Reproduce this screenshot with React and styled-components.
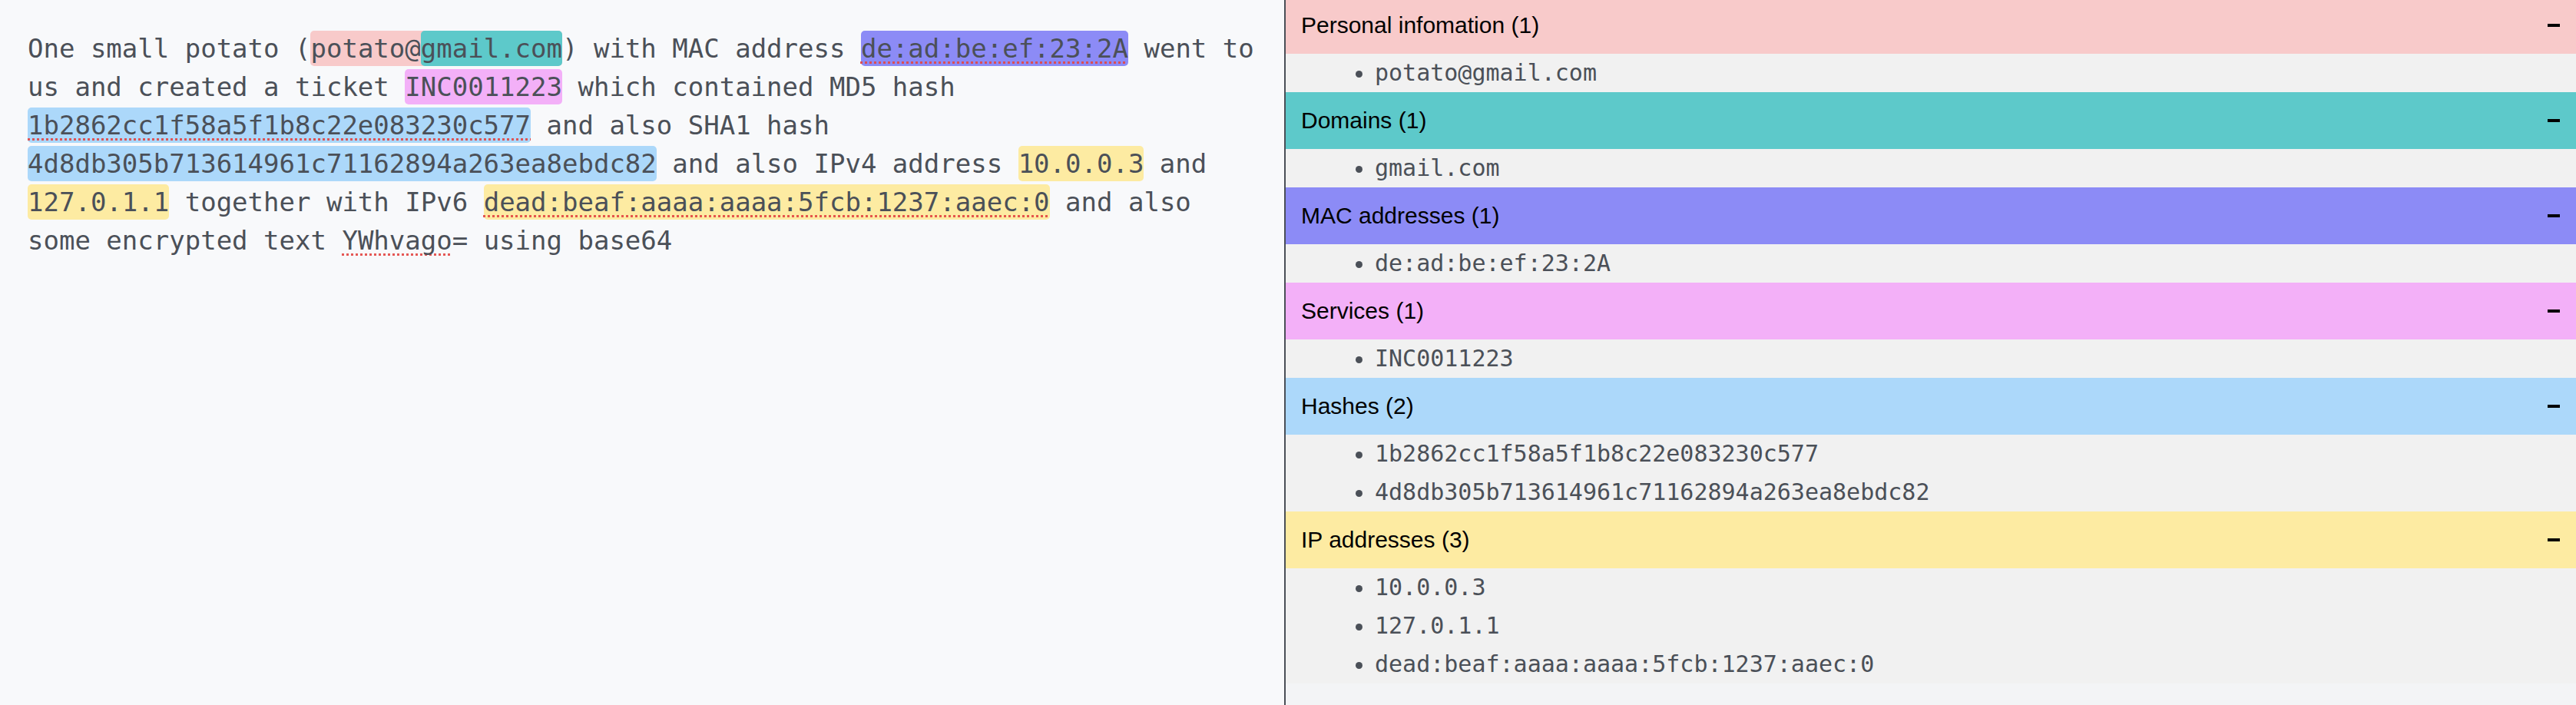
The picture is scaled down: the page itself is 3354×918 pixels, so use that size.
import React from "react";
import styled, { createGlobalStyle } from "styled-components";

const GlobalStyle = createGlobalStyle`
  html, body { margin: 0; padding: 0; }
  body { overflow: hidden; background: #f3f4f6; }
`;

const COLORS = {
  personal: "#f8caca",
  domain: "#5dc9ca",
  mac: "#8c8bf6",
  service: "#f3b0f8",
  hash: "#acd8fa",
  ip: "#fdeba2",
};

const Layout = styled.div`
  display: grid;
  grid-template-columns: 1672px 1fr;
  height: 918px;
  overflow: hidden;
`;

const Editor = styled.div`
  background: #f8f9fb;
  padding: 38px 32px 0 36px;
  font-family: "DejaVu Sans Mono", "Liberation Mono", monospace;
  font-size: 34px;
  line-height: 50px;
  color: #4b5058;
  white-space: pre-wrap;
  word-break: normal;
`;

const Mark = styled.span`
  background: ${(p) => p.$color};
  border-radius: 5px;
  padding: 3px 0;
`;

const Misspelt = styled.span`
  text-decoration-line: underline;
  text-decoration-style: dotted;
  text-decoration-color: rgba(226, 70, 66, 0.9);
  text-decoration-thickness: 3px;
  text-underline-offset: 5px;
  text-decoration-skip-ink: none;
`;

const Panel = styled.aside`
  border-left: 2px solid #4a4f57;
  background: #f3f4f6;
  overflow: hidden;
`;

const SectionList = styled.div`
  margin-top: -4px;
`;

const Header = styled.div`
  height: 74px;
  background: ${(p) => p.$color};
  display: flex;
  align-items: center;
  justify-content: space-between;
  padding: 0 21px 0 20px;
  font-family: "Liberation Sans", Arial, sans-serif;
  font-size: 30px;
  color: #000;
`;

const Toggle = styled.button`
  border: 0;
  background: transparent;
  padding: 0;
  width: 16px;
  height: 20px;
  display: flex;
  align-items: center;
  cursor: pointer;
`;

const MinusBar = styled.span`
  display: block;
  width: 16px;
  height: 4px;
  background: #000;
`;

const Items = styled.ul`
  margin: 0;
  padding: 0 0 0 116px;
  background: #f1f1f1;
  list-style: disc;
  font-family: "DejaVu Sans Mono", "Liberation Mono", monospace;
  font-size: 30px;
  color: #4b5058;
`;

const Item = styled.li`
  line-height: 50px;
  padding-left: 0;
`;

const sections = [
  { title: "Personal infomation", color: COLORS.personal, items: ["potato@gmail.com"] },
  { title: "Domains", color: COLORS.domain, items: ["gmail.com"] },
  { title: "MAC addresses", color: COLORS.mac, items: ["de:ad:be:ef:23:2A"] },
  { title: "Services", color: COLORS.service, items: ["INC0011223"] },
  {
    title: "Hashes",
    color: COLORS.hash,
    items: ["1b2862cc1f58a5f1b8c22e083230c577", "4d8db305b713614961c71162894a263ea8ebdc82"],
  },
  {
    title: "IP addresses",
    color: COLORS.ip,
    items: ["10.0.0.3", "127.0.1.1", "dead:beaf:aaaa:aaaa:5fcb:1237:aaec:0"],
  },
];

export default function App() {
  return (
    <>
      <GlobalStyle />
      <Layout>
        <Editor>
          One small potato (
          <Mark $color={COLORS.personal}>
            potato@<Mark $color={COLORS.domain}>gmail.com</Mark>
          </Mark>
          ) with MAC address{" "}
          <Mark $color={COLORS.mac}>
            <Misspelt>de:ad:be:ef:23:2A</Misspelt>
          </Mark>{" "}
          went to us and created a ticket <Mark $color={COLORS.service}>INC0011223</Mark> which
          contained MD5 hash{" "}
          <Mark $color={COLORS.hash}>
            <Misspelt>1b2862cc1f58a5f1b8c22e083230c577</Misspelt>
          </Mark>{" "}
          and also SHA1 hash <Mark $color={COLORS.hash}>4d8db305b713614961c71162894a263ea8ebdc82</Mark>{" "}
          and also IPv4 address <Mark $color={COLORS.ip}>10.0.0.3</Mark> and{" "}
          <Mark $color={COLORS.ip}>127.0.1.1</Mark> together with IPv6{" "}
          <Mark $color={COLORS.ip}>
            <Misspelt>dead:beaf:aaaa:aaaa:5fcb:1237:aaec:0</Misspelt>
          </Mark>{" "}
          and also some encrypted text <Misspelt>YWhvago</Misspelt>= using base64
        </Editor>
        <Panel>
          <SectionList>
            {sections.map((s) => (
              <section key={s.title}>
                <Header $color={s.color}>
                  <span>
                    {s.title} ({s.items.length})
                  </span>
                  <Toggle aria-label="Collapse">
                    <MinusBar />
                  </Toggle>
                </Header>
                <Items>
                  {s.items.map((it) => (
                    <Item key={it}>{it}</Item>
                  ))}
                </Items>
              </section>
            ))}
          </SectionList>
        </Panel>
      </Layout>
    </>
  );
}
